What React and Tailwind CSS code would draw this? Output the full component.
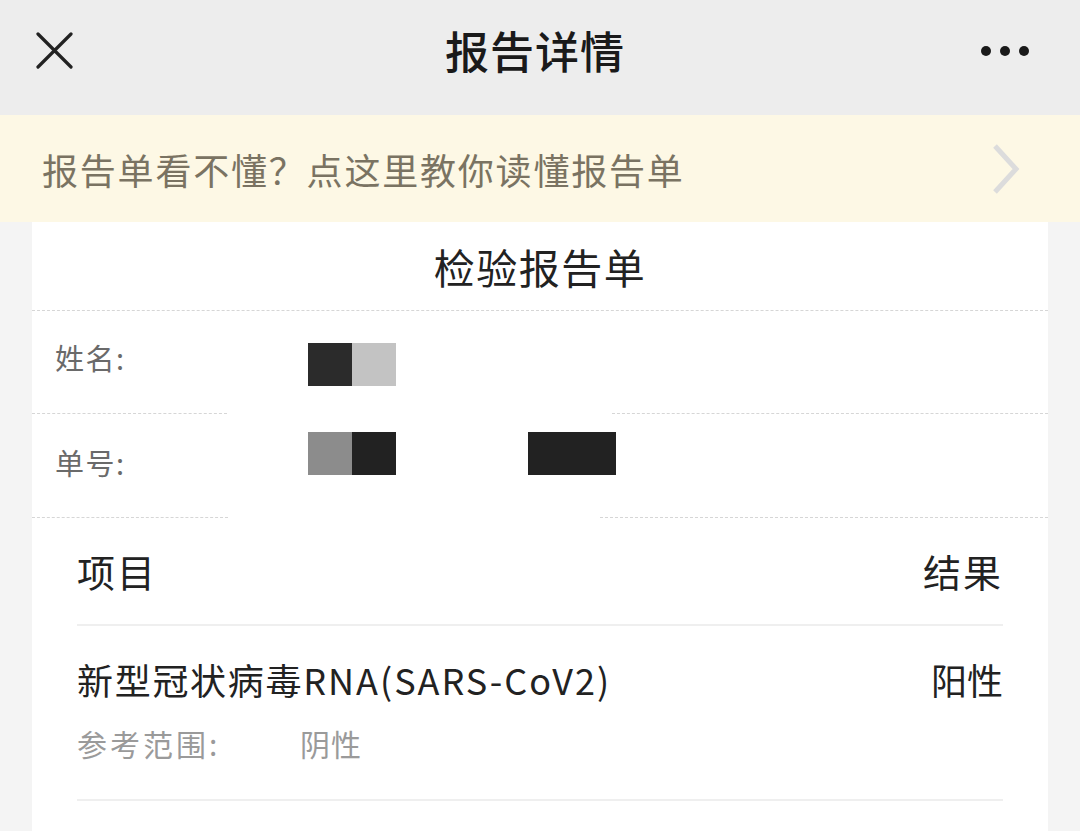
import React from "react";

const FONT = { fontFamily: '"Noto Sans CJK SC", "Noto Sans", sans-serif' };

function Dashed({ segments }) {
  return (
    <div className="relative h-px w-full">
      {segments.map(([l, r], i) => (
        <div
          key={i}
          className="absolute top-0 h-0 border-t border-dashed border-[#d6d6d6]"
          style={{ left: l, width: r - l }}
        />
      ))}
    </div>
  );
}

export default function App() {
  return (
    <div className="w-[1080px] h-[831px] overflow-hidden bg-[#f4f4f4]" style={FONT}>
      {/* header */}
      <div className="h-[115px] bg-[#ededed] pb-[15px]">
        <div className="flex h-[100px] items-center">
          <div className="flex w-[250px] items-center pl-[36px]">
            <svg width="37" height="37" viewBox="0 0 37 37">
              <path d="M2 2 L35 35 M35 2 L2 35" stroke="#222" strokeWidth="3.2" strokeLinecap="round" />
            </svg>
          </div>
          <div className="flex-1 text-center text-[44px] leading-[50px] font-medium text-[#1a1a1a] tracking-[1px] pr-[10px]">
            报告详情
          </div>
          <div className="flex w-[250px] items-center justify-end gap-[9px] pr-[51px] pt-[2px]">
            <span className="block h-[10px] w-[10px] rounded-full bg-[#1a1a1a]" />
            <span className="block h-[10px] w-[10px] rounded-full bg-[#1a1a1a]" />
            <span className="block h-[10px] w-[10px] rounded-full bg-[#1a1a1a]" />
          </div>
        </div>
      </div>

      {/* banner */}
      <div className="flex h-[107px] items-center justify-between bg-[#fdf8e5] pl-[42px] pr-[60px]">
        <span className="text-[36px] leading-[44px] tracking-[1.8px] text-[#7a7362]">
          报告单看不懂？点这里教你读懂报告单
        </span>
        <svg width="28" height="52" viewBox="0 0 28 52">
          <path d="M3 3 L24 26 L3 49" fill="none" stroke="#dcdcdc" strokeWidth="5" strokeLinejoin="miter" />
        </svg>
      </div>

      {/* card */}
      <div className="mx-[32px] h-[609px] bg-white">
        <div className="flex h-[88px] items-center justify-center text-[41px] leading-[48px] tracking-[1.5px] text-[#222]">
          检验报告单
        </div>
        <Dashed segments={[[0, 1016]]} />

        <div className="flex h-[102px] items-start">
          <div className="mt-[31px] w-[276px] pl-[23px] text-[29px] leading-[30px] tracking-[1.5px] text-[#6a6a6a]">
            姓名:
          </div>
          <div className="mt-[32px] flex">
            <div className="h-[43px] w-[44px] bg-[#2b2b2b]" />
            <div className="h-[43px] w-[44px] bg-[#c3c3c3]" />
          </div>
        </div>
        <Dashed segments={[[0, 195], [580, 1016]]} />

        <div className="flex h-[103px] items-start">
          <div className="mt-[33px] w-[276px] pl-[23px] text-[29px] leading-[30px] tracking-[1.5px] text-[#6a6a6a]">
            单号:
          </div>
          <div className="mt-[18px] flex">
            <div className="h-[43px] w-[44px] bg-[#8c8c8c]" />
            <div className="h-[43px] w-[44px] bg-[#222]" />
          </div>
          <div className="ml-[132px] mt-[18px] h-[43px] w-[88px] bg-[#222]" />
        </div>
        <Dashed segments={[[0, 196], [568, 1016]]} />

        <div className="px-[45px]">
          <div className="flex h-[106px] items-center justify-between text-[38px] leading-[44px] tracking-[2px] text-[#222]">
            <span>项目</span>
            <span className="tracking-[2px]">结果</span>
          </div>
          <div className="h-[2px] bg-[#efefef]" />
          <div className="pt-[33px] pb-[40px]">
            <div className="flex items-center justify-between text-[36px] leading-[40px] text-[#222]">
              <span>
                <span className="tracking-[1.7px]">新型冠状病毒</span>
                <span className="tracking-[2px]">RNA(SARS-CoV2)</span>
              </span>
              <span>阳性</span>
            </div>
            <div className="mt-[28px] flex text-[30px] leading-[32px] text-[#9a9a9a]">
              <span className="w-[223px] tracking-[3px]">参考范围:</span>
              <span className="tracking-[1px]">阴性</span>
            </div>
          </div>
          <div className="h-[2px] bg-[#efefef]" />
        </div>
      </div>
    </div>
  );
}
